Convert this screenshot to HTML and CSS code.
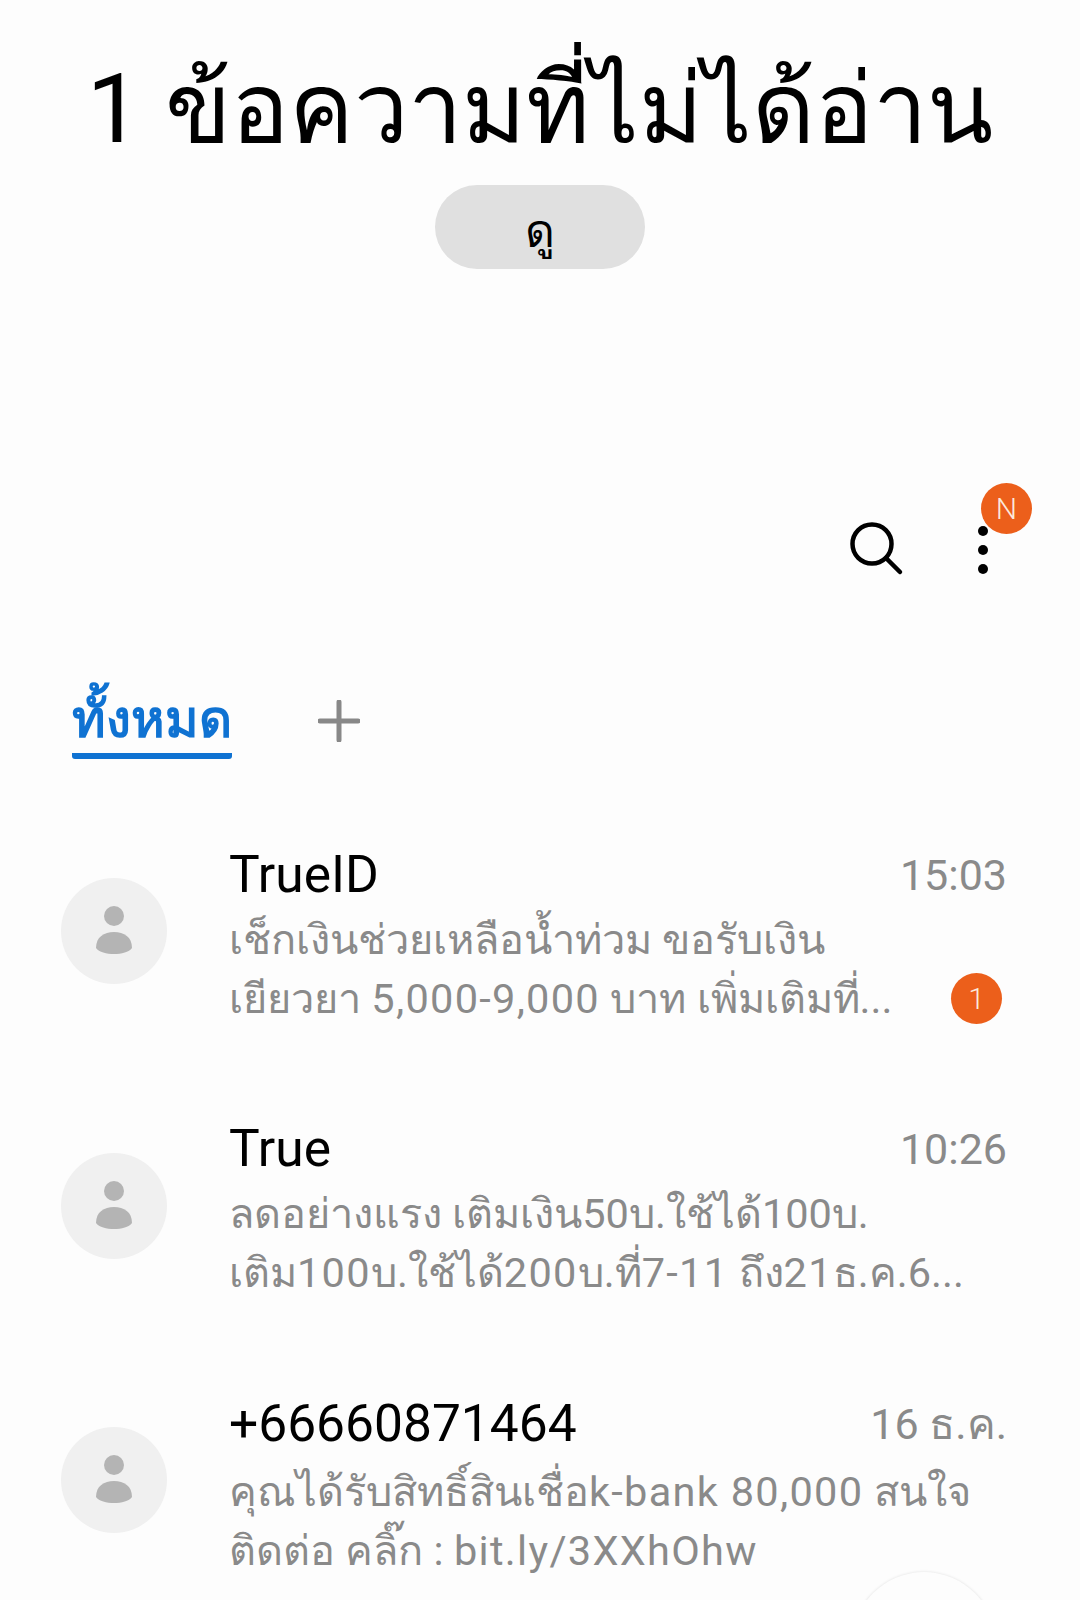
FILE: index.html
```html
<!DOCTYPE html>
<html lang="th">
<head>
  <meta charset="UTF-8">
  <title>ข้อความ</title>
  <link rel="stylesheet" href="styles.css">
</head>
<body>
<div class="screen">
  <header class="top">
    <h1 class="unread">1 ข้อความที่ไม่ได้อ่าน</h1>
    <button class="view-btn" type="button">ดู</button>
  </header>

  <div class="toolbar">
    <svg class="search" width="60" height="60" viewBox="0 0 60 60" fill="none" stroke="#000" stroke-width="4.5" stroke-linecap="round">
      <circle cx="24" cy="24" r="19.5"/>
      <path d="M38 38 L52 52"/>
    </svg>
    <div class="more">
      <span class="dot"></span>
      <span class="dot"></span>
      <span class="dot"></span>
      <span class="new-badge">N</span>
    </div>
  </div>

  <nav class="tabs">
    <a class="tab-active">ทั้งหมด</a>
    <svg class="plus" width="42" height="42" viewBox="0 0 42 42" stroke="#888" stroke-width="5" stroke-linecap="round">
      <path d="M21 2 V40 M2 21 H40"/>
    </svg>
  </nav>

  <main class="list">
    <div class="row">
      <div class="avatar">
        <svg width="36" height="50" viewBox="0 0 36 50" fill="#b4b4b4">
          <circle cx="18" cy="10" r="10"/>
          <path d="M0 42 C0 31 8 26 18 26 C28 26 36 31 36 42 C30 50 6 50 0 42 Z"/>
        </svg>
      </div>
      <div class="body">
        <div class="head"><span class="name">TrueID</span><span class="time">15:03</span></div>
        <div class="foot">
          <p class="preview">เช็กเงินช่วยเหลือน้ำท่วม ขอรับเงิน<br>เยียวยา <span class="latin">5,000-9,000</span> บาท เพิ่มเติมที่...</p>
          <span class="count">1</span>
        </div>
      </div>
    </div>

    <div class="row">
      <div class="avatar">
        <svg width="36" height="50" viewBox="0 0 36 50" fill="#b4b4b4">
          <circle cx="18" cy="10" r="10"/>
          <path d="M0 42 C0 31 8 26 18 26 C28 26 36 31 36 42 C30 50 6 50 0 42 Z"/>
        </svg>
      </div>
      <div class="body">
        <div class="head"><span class="name">True</span><span class="time">10:26</span></div>
        <div class="foot">
          <p class="preview">ลดอย่างแรง เติมเงิน50บ.ใช้ได้100บ.<br>เติม<span class="latin">100</span>บ.ใช้ได้<span class="latin">200</span>บ.ที่<span class="latin">7-11</span> ถึง<span class="latin">21</span>ธ.ค.6...</p>
        </div>
      </div>
    </div>

    <div class="row">
      <div class="avatar">
        <svg width="36" height="50" viewBox="0 0 36 50" fill="#b4b4b4">
          <circle cx="18" cy="10" r="10"/>
          <path d="M0 42 C0 31 8 26 18 26 C28 26 36 31 36 42 C30 50 6 50 0 42 Z"/>
        </svg>
      </div>
      <div class="body">
        <div class="head"><span class="name">+66660871464</span><span class="time">16 ธ.ค.</span></div>
        <div class="foot">
          <p class="preview">คุณได้รับสิทธิ์สินเชื่อ<span class="latin">k-bank 80,000</span> สนใจ<br>ติดต่อ คลิ๊ก : <span class="latin">bit.ly/3XXhOhw</span></p>
        </div>
      </div>
    </div>
  </main>

  <div class="fab"></div>
</div>
</body>
</html>
```

FILE: styles.css
```css
html, body {
  margin: 0;
  padding: 0;
}

body {
  background-color: #fdfdfd;
  color: #000;
  font-family: Roboto, "Noto Sans", "Noto Sans CJK SC", sans-serif;
}

.screen {
  position: relative;
  height: 1600px;
  overflow: hidden;
}

/* header */
.top {
  display: flex;
  flex-direction: column;
  align-items: center;
  padding-top: 33px;
}

.unread {
  margin: 0;
  height: 152px;
  font-size: 97px;
  line-height: 152px;
  font-weight: 400;
  white-space: nowrap;
}

.view-btn {
  width: 210px;
  height: 84px;
  padding: 8px 0 0;
  border: 0;
  border-radius: 42px;
  background-color: #e0e0e0;
  color: #000;
  font-family: inherit;
  font-size: 46px;
  line-height: 60px;
}

/* search and menu */
.toolbar {
  display: flex;
  justify-content: flex-end;
  align-items: center;
  gap: 70px;
  margin-top: 251px;
  padding-right: 92px;
}

.search {
  display: block;
}

.more {
  position: relative;
  display: flex;
  flex-direction: column;
  gap: 9px;
}

.dot {
  width: 10px;
  height: 10px;
  border-radius: 50%;
  background-color: #000;
}

.new-badge {
  position: absolute;
  left: 3px;
  top: -43px;
  width: 51px;
  height: 51px;
  border-radius: 50%;
  background-color: #ec5f1b;
  color: #fbe9dd;
  font-size: 30px;
  font-weight: 300;
  line-height: 51px;
  text-align: center;
}

/* tabs */
.tabs {
  display: flex;
  align-items: center;
  gap: 86px;
  margin-top: 103px;
  padding-left: 72px;
}

.tab-active {
  display: block;
  padding-top: 3px;
  border-bottom: 6px solid #0f72d2;
  border-radius: 3px;
  color: #0f72d2;
  font-size: 51px;
  font-weight: 700;
  line-height: 67px;
}

/* conversations */
.list {
  margin-top: 35px;
}

.row {
  display: flex;
  align-items: center;
  height: 274.5px;
  padding: 0 73px 0 61px;
}

.avatar {
  display: flex;
  flex: none;
  align-items: center;
  justify-content: center;
  width: 106px;
  height: 106px;
  margin-right: 62px;
  border-radius: 50%;
  background-color: #f0f0f0;
}

.body {
  flex: 1;
  min-width: 0;
  padding-top: 9px;
}

.head {
  display: flex;
  justify-content: space-between;
  align-items: center;
  margin-bottom: 4px;
}

.name {
  font-size: 51.5px;
  line-height: 62px;
}

.time {
  color: #8a8a8a;
  font-size: 43px;
}

.foot {
  display: flex;
  justify-content: space-between;
  align-items: flex-end;
}

.preview {
  margin: 0;
  color: #8a8a8a;
  font-size: 41.5px;
  line-height: 59px;
  white-space: nowrap;
}

/* latin runs are a bit wider in the original */
.latin {
  letter-spacing: 1.3px;
}

.count {
  width: 51px;
  height: 51px;
  margin: 0 5px 4px 0;
  border-radius: 50%;
  background-color: #ec5f1b;
  color: #fbe9dd;
  font-size: 30px;
  font-weight: 300;
  line-height: 51px;
  text-align: center;
}

/* floating button, cut off by the bottom edge */
.fab {
  position: absolute;
  left: 852px;
  top: 1572px;
  width: 144px;
  height: 144px;
  border-radius: 50%;
  background-color: #fdfdfd;
  box-shadow: 0 0 3px rgba(0, 0, 0, 0.12);
}
```
